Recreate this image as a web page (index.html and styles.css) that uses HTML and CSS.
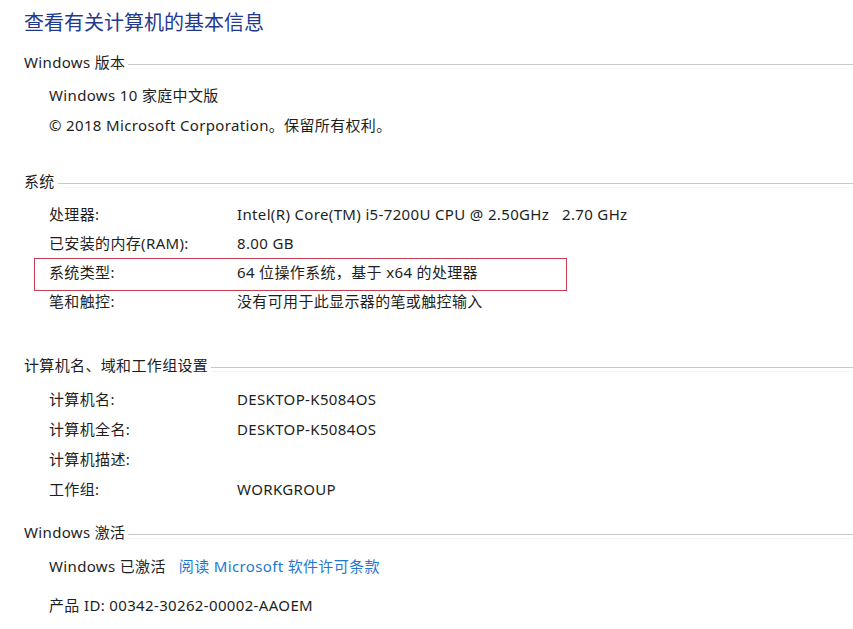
FILE: index.html
```html
<!DOCTYPE html>
<html lang="zh-CN">
<head>
<meta charset="utf-8">
<title>查看有关计算机的基本信息</title>
<link rel="stylesheet" href="styles.css">
</head>
<body>
<main class="page">
  <h1 class="title">查看有关计算机的基本信息</h1>

  <section class="section sec-edition">
    <div class="header"><span class="header-text">Windows 版本</span><span class="rule"></span></div>
    <div class="body">
      <div class="line">Windows 10 家庭中文版</div>
      <div class="line">© 2018 Microsoft Corporation。保留所有权利。</div>
    </div>
  </section>

  <section class="section sec-system">
    <div class="header"><span class="header-text">系统</span><span class="rule"></span></div>
    <div class="body tight">
      <div class="row"><span class="label">处理器:</span><span class="value">Intel(R) Core(TM) i5-7200U CPU @ 2.50GHz&nbsp;&nbsp; 2.70 GHz</span></div>
      <div class="row"><span class="label">已安装的内存(RAM):</span><span class="value">8.00 GB</span></div>
      <div class="row hl"><span class="label">系统类型:</span><span class="value">64 位操作系统，基于 x64 的处理器</span></div>
      <div class="row"><span class="label">笔和触控:</span><span class="value">没有可用于此显示器的笔或触控输入</span></div>
    </div>
  </section>

  <section class="section sec-name">
    <div class="header"><span class="header-text">计算机名、域和工作组设置</span><span class="rule"></span></div>
    <div class="body">
      <div class="row"><span class="label">计算机名:</span><span class="value">DESKTOP-K5084OS</span></div>
      <div class="row"><span class="label">计算机全名:</span><span class="value">DESKTOP-K5084OS</span></div>
      <div class="row"><span class="label">计算机描述:</span><span class="value"></span></div>
      <div class="row"><span class="label">工作组:</span><span class="value">WORKGROUP</span></div>
    </div>
  </section>

  <section class="section sec-activation">
    <div class="header"><span class="header-text">Windows 激活</span><span class="rule"></span></div>
    <div class="body">
      <div class="line">Windows 已激活<a class="link" href="#">阅读 Microsoft 软件许可条款</a></div>
      <div class="line pid">产品 ID: 00342-30262-00002-AAOEM</div>
    </div>
  </section>
</main>
</body>
</html>
```

FILE: styles.css
```css
html, body {
  margin: 0;
  padding: 0;
  background: #ffffff;
}

body {
  font-family: "Noto Sans", "Noto Sans CJK SC", sans-serif;
  font-size: 15px;
  letter-spacing: 0.35px;
  color: #1e1e1e;
}

.page {
  padding: 8px 0 0 24px;
}

.title {
  margin: 0;
  font-size: 20px;
  font-weight: normal;
  letter-spacing: 0;
  line-height: 30px;
  color: #1f3a8f;
}

.header {
  display: flex;
  align-items: center;
  height: 22px;
  line-height: 22px;
}

.header-text {
  white-space: nowrap;
  padding-right: 3px;
}

.rule {
  flex: 1;
  height: 0;
  margin-top: 5px;
  border-top: 1px solid #c8c8c8;
  box-shadow: 0 4px 0 #f4f4f4;
}

.sec-edition { margin-top: 13px; }
.sec-system { margin-top: 30px; }
.sec-name { margin-top: 38px; }
.sec-activation { margin-top: 17px; }

.body {
  padding-left: 25px;
  padding-top: 7px;
}

.sec-system .body { padding-top: 8px; }
.sec-name .body { padding-top: 8px; }
.sec-activation .body { padding-top: 8px; }

.line {
  height: 30px;
  line-height: 30px;
  white-space: nowrap;
}

.line.pid {
  margin-top: 9px;
}

.link {
  color: #1e78d2;
  text-decoration: none;
  margin-left: 13px;
}

.row {
  display: flex;
  height: 30px;
  line-height: 30px;
  white-space: nowrap;
}

.sec-system .row {
  height: 29px;
  line-height: 29px;
}

.label {
  width: 188px;
  flex: none;
}

.value {
  flex: none;
}

.row.hl {
  position: relative;
}

.row.hl::after {
  content: "";
  position: absolute;
  left: -15px;
  top: 0;
  width: 533px;
  height: 33px;
  border: 1px solid #c73d50;
  box-sizing: border-box;
  pointer-events: none;
}
```
